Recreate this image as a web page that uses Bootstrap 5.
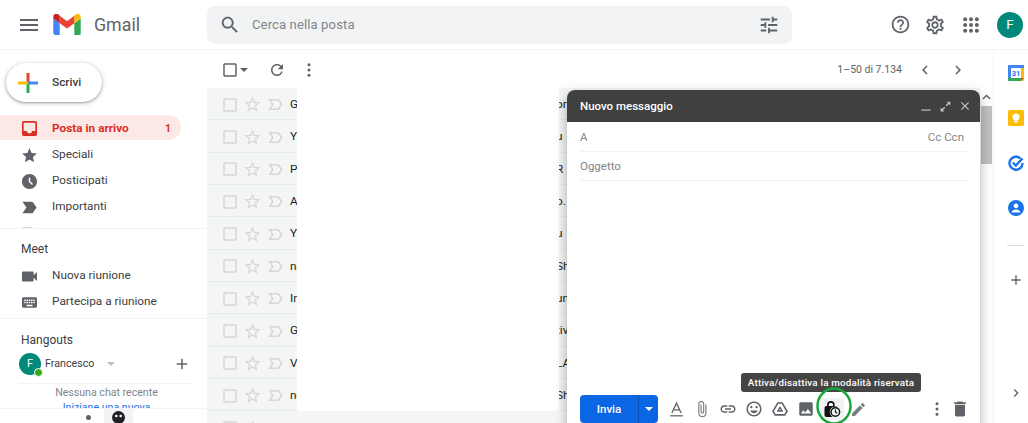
<!DOCTYPE html>
<html lang="it">
<head>
<meta charset="utf-8">
<title>Gmail</title>
<link href="https://cdn.jsdelivr.net/npm/bootstrap@5.3.0/dist/css/bootstrap.min.css" rel="stylesheet">
<style>
html,body{height:423px;overflow:hidden;background:#fff}
body{font-family:Roboto,"Liberation Sans",sans-serif;color:#202124;position:relative;width:1028px}
svg{display:block;fill:currentColor;flex:none}
.grey{color:#5f6368}
.topbar{height:50px;border-bottom:1px solid #f1f3f4}
.burger{width:24px;height:24px;margin-left:17px}
.logo{width:28px;height:21px;margin-left:12px;margin-top:-1px}
.brand{font-size:17.8px;color:#5f6368;margin-left:13px;width:113px;line-height:1}
.searchbox{width:585px;height:38px;background:#f1f3f4;border-radius:8px;padding:0 12px}
.searchbox span{font-size:13.1px;color:#80868b;margin-left:11px;letter-spacing:.1px}
.topright{margin-left:98px}
.avatar-top{width:26px;height:26px;border-radius:50%;background:#00897b;color:#fff;font-size:13.5px;margin-left:16px}
.page{height:373px}
.sidebar{width:207px;flex:none}
.nav-area{height:179px;overflow:hidden;border-bottom:1px solid #f1f3f4;padding-top:13px}
.compose-btn{width:96px;height:39px;margin-left:6px;border-radius:20px;background:#fff;box-shadow:0 1px 2px rgba(60,64,67,.35),0 1px 4px 1px rgba(60,64,67,.2);font-size:11.8px;font-weight:500;color:#3c4043;padding-left:12px;gap:14px}
.nav-list{margin-top:13px}
.nav-line{height:26px;width:181px;padding:2px 0 0 22px;font-size:11.8px;color:#3c4043;border-radius:0 13px 13px 0}
.nav-line svg{margin-right:15px}
.nav-line.on{background:#fce8e6;color:#d93025;font-weight:700;height:25px;margin-bottom:1px}
.nav-line .num{margin-left:auto;margin-right:10px;font-size:10.5px}
.meet{height:90px;border-bottom:1px solid #f1f3f4;padding-top:10px}
.side-head{font-size:12px;padding-left:21px;color:#3c4043;line-height:20px;height:20px}
.meet .nav-line{position:relative;top:-1px}
.hang{height:89px;overflow:hidden;padding-top:11px;position:relative}
.me-row{height:24px;padding:0 0 0 19px;margin-top:2px;font-size:10.7px;color:#3c4043;position:relative}
.me-name{padding-top:1px}
.me-ava{width:22px;height:22px;border-radius:50%;background:#00897b;color:#fff;font-size:11px;position:relative}
.me-dot{position:absolute;right:-2px;bottom:-2px;width:9px;height:9px;border-radius:50%;background:#34a81a;border:1px solid #fff}
.caret-s{width:0;height:0;border:4px solid transparent;border-top-color:#bdc1c6;border-bottom:0}
.chat-box{margin:7px 13px 0 19px;border-top:1px solid #f1f3f4;text-align:center;font-size:10.6px;color:#80868b;line-height:15px;padding-top:1px}
.chat-box a{color:#1a73e8;text-decoration:none;display:block}
.hang-foot{height:15px;border-top:1px solid #f1f3f4;overflow:hidden}
.foot-dot{width:5px;height:5px;border-radius:50%;background:#5f6368;margin:6px 13px 0 86px}
.foot-tab{width:29px;height:15px;background:#f1f3f4;display:flex;justify-content:center;padding-top:2px}
.mainpane{width:773px;flex:none}
.tools{height:38px;padding-left:14px;padding-top:1px;flex:none}
.pager{margin-left:auto;font-size:10.5px;color:#5f6368}
.mailrow{height:32.35px;flex:none;background:#f4f6f6;border-bottom:1px solid #e9ecee;padding:2px 0 0 14px;white-space:nowrap;overflow:hidden;font-size:11.8px}
.mailrow svg{color:#d4d6d8}
.sender{width:266px;flex:none;margin-left:5px;color:#202124}
.frag{color:#202124}
.sbar{width:13px;flex:none;height:373px;padding:41px 1px 0}
.sbar svg{margin:0 auto;color:#5f6368}
.thumb{height:58px;background:#c1c1c1;margin-top:4px}
.rail{width:35px;flex:none;border-left:1px solid #f1f3f4;padding-top:15px}
.rail-i{width:16px;height:16px;margin:0 0 29px 14px}
.rail-sep{width:17px;height:1px;background:#dadce0;margin:0 0 26px 13px}
.cover{position:absolute;left:297px;top:88px;width:262px;height:323px;background:#fff}
.composer{position:absolute;left:567px;top:90px;width:413px;height:340px;background:#fff;border-radius:8px 8px 0 0;box-shadow:0 8px 10px 1px rgba(0,0,0,.14),0 3px 14px 2px rgba(0,0,0,.12),0 5px 5px -3px rgba(0,0,0,.2)}
.comp-head{height:32px;background:#404040;border-radius:8px 8px 0 0;color:#fff;font-size:11.5px;font-weight:500;padding:0 8px 0 13px}
.comp-head span{padding-top:1px}
.comp-head svg{color:#c4c4c4}
.comp-field{height:29px;margin:0 12px 0 13px;border-bottom:1px solid #f1f3f4;font-size:11.5px;color:#80868b;padding-top:2px}
.comp-field.first{height:30px}
.comp-field .cc{margin-left:auto;margin-right:4px}
.comp-actions{position:absolute;left:13px;top:305px;right:0;height:28px}
.send-a{width:58px;height:28px;background:#0b66e4;border-radius:4px 0 0 4px;color:#fff;font-size:11.5px;font-weight:500;border:0;padding:2px 0 0}
.send-b{width:20px;height:28px;background:#0b66e4;border-radius:0 4px 4px 0;border:0;border-left:1px solid #0a50b4;padding:0}
.send-b i{display:block;width:0;height:0;border:4px solid transparent;border-top-color:#fff;border-bottom:0;margin:auto}
.tool-i{width:26px;height:24px;display:flex;justify-content:center;align-items:center;color:#5f6368}
.tool-i.hot{background:#f1f3f4;color:#111;height:23px;width:24px;margin:0 1px}
.tool-i.dim{color:#777b7f}
.tool-first{margin-left:5px}
.tip{position:absolute;left:741px;top:373px;width:180px;height:19px;background:#444;color:#fff;border-radius:3px;font-size:9.8px;font-weight:500;text-align:center;line-height:19px;letter-spacing:.2px;white-space:nowrap}
.ring{position:absolute;left:816px;top:387px}
</style>
</head>
<body>
<svg width="0" height="0" style="position:absolute">
<symbol id="i-menu" viewBox="0 0 24 24"><path d="M3 18h18v-2H3v2zm0-5h18v-2H3v2zm0-7v2h18V6H3z"/></symbol>
<symbol id="i-search" viewBox="0 0 24 24"><path d="M15.5 14h-.79l-.28-.27C15.41 12.59 16 11.11 16 9.5 16 5.91 13.09 3 9.5 3S3 5.91 3 9.5 5.91 16 9.5 16c1.61 0 3.09-.59 4.23-1.57l.27.28v.79l5 4.99L20.49 19l-4.99-5zm-6 0C7.01 14 5 11.99 5 9.5S7.01 5 9.5 5 14 7.01 14 9.5 11.99 14 9.5 14z"/></symbol>
<symbol id="i-tune" viewBox="0 0 24 24"><path d="M3 17v2h6v-2H3zM3 5v2h10V5H3zm10 16v-2h8v-2h-8v-2h-2v6h2zM7 9v2H3v2h4v2h2V9H7zm14 4v-2H11v2h10zm-6-4h2V7h4V5h-4V3h-2v6z"/></symbol>
<symbol id="i-help" viewBox="0 0 24 24"><path d="M11 18h2v-2h-2v2zm1-16C6.48 2 2 6.48 2 12s4.48 10 10 10 10-4.48 10-10S17.52 2 12 2zm0 18c-4.41 0-8-3.59-8-8s3.59-8 8-8 8 3.59 8 8-3.59 8-8 8zm0-14c-2.21 0-4 1.79-4 4h2c0-1.1.9-2 2-2s2 .9 2 2c0 2-3 1.75-3 5h2c0-2.25 3-2.5 3-5 0-2.21-1.79-4-4-4z"/></symbol>
<symbol id="i-gear" viewBox="0 0 24 24"><path d="M19.43 12.98c.04-.32.07-.64.07-.98 0-.34-.03-.66-.07-.98l2.11-1.65c.19-.15.24-.42.12-.64l-2-3.46c-.09-.16-.26-.25-.44-.25-.06 0-.12.01-.17.03l-2.49 1c-.52-.4-1.08-.73-1.69-.98l-.38-2.65C14.46 2.18 14.25 2 14 2h-4c-.25 0-.46.18-.49.42l-.38 2.65c-.61.25-1.17.59-1.69.98l-2.49-1c-.06-.02-.12-.03-.18-.03-.17 0-.34.09-.43.25l-2 3.46c-.13.22-.07.49.12.64l2.11 1.65c-.04.32-.07.65-.07.98 0 .33.03.66.07.98l-2.11 1.65c-.19.15-.24.42-.12.64l2 3.46c.09.16.26.25.44.25.06 0 .12-.01.17-.03l2.49-1c.52.4 1.08.73 1.69.98l.38 2.65c.03.24.24.42.49.42h4c.25 0 .46-.18.49-.42l.38-2.65c.61-.25 1.17-.59 1.69-.98l2.49 1c.06.02.12.03.18.03.17 0 .34-.09.43-.25l2-3.46c.12-.22.07-.49-.12-.64l-2.11-1.65zm-1.98-1.71c.04.31.05.52.05.73 0 .21-.02.43-.05.73l-.14 1.13.89.7 1.08.84-.7 1.21-1.27-.51-1.04-.42-.9.68c-.43.32-.84.56-1.25.73l-1.06.43-.16 1.13-.2 1.35h-1.4l-.19-1.35-.16-1.13-1.06-.43c-.43-.18-.83-.41-1.23-.71l-.91-.7-1.06.43-1.27.51-.7-1.21 1.08-.84.89-.7-.14-1.13c-.03-.31-.05-.54-.05-.74s.02-.43.05-.73l.14-1.13-.89-.7-1.08-.84.7-1.21 1.27.51 1.04.42.9-.68c.43-.32.84-.56 1.25-.73l1.06-.43.16-1.13.2-1.35h1.39l.19 1.35.16 1.13 1.06.43c.43.18.83.41 1.23.71l.91.7 1.06-.43 1.27-.51.7 1.21-1.07.85-.89.7.14 1.13zM12 8c-2.21 0-4 1.79-4 4s1.79 4 4 4 4-1.79 4-4-1.79-4-4-4zm0 6c-1.1 0-2-.9-2-2s.9-2 2-2 2 .9 2 2-.9 2-2 2z"/></symbol>
<symbol id="i-apps" viewBox="0 0 24 24"><g><circle cx="5" cy="5" r="2.400"/><circle cx="12" cy="5" r="2.400"/><circle cx="19" cy="5" r="2.400"/><circle cx="5" cy="12" r="2.400"/><circle cx="12" cy="12" r="2.400"/><circle cx="19" cy="12" r="2.400"/><circle cx="5" cy="19" r="2.400"/><circle cx="12" cy="19" r="2.400"/><circle cx="19" cy="19" r="2.400"/></g></symbol>
<symbol id="i-refresh" viewBox="0 0 24 24"><path d="M17.65 6.35C16.2 4.9 14.21 4 12 4c-4.42 0-7.99 3.58-7.99 8s3.57 8 7.99 8c3.73 0 6.84-2.55 7.73-6h-2.08c-.82 2.33-3.04 4-5.65 4-3.31 0-6-2.69-6-6s2.69-6 6-6c1.66 0 3.14.69 4.22 1.78L13 11h7V4l-2.35 2.35z"/></symbol>
<symbol id="i-dots" viewBox="0 0 24 24"><circle cx="12" cy="5" r="2"/><circle cx="12" cy="12" r="2"/><circle cx="12" cy="19" r="2"/></symbol>
<symbol id="i-star" viewBox="0 0 24 24"><path d="M12 17.27L18.18 21l-1.64-7.03L22 9.24l-7.19-.61L12 2 9.19 8.63 2 9.24l5.46 4.73L5.82 21z"/></symbol>
<symbol id="i-staro" viewBox="0 0 24 24"><path d="M22 9.24l-7.19-.62L12 2 9.19 8.63 2 9.24l5.46 4.73L5.82 21 12 17.27 18.18 21l-1.63-7.03L22 9.24zM12 15.4l-3.76 2.27 1-4.28-3.32-2.88 4.38-.38L12 6.1l1.71 4.04 4.38.38-3.32 2.88 1 4.28L12 15.4z"/></symbol>
<symbol id="i-labelo" viewBox="0 0 24 24"><path d="M15 19H3l4.5-7L3 5h12c.65 0 1.26.31 1.63.84L21 12l-4.37 6.16c-.37.53-.98.84-1.63.84zm-8.5-2H15l3.5-5L15 7H6.5l3.2 5-3.2 5z"/></symbol>
<symbol id="i-label" viewBox="0 0 24 24"><path d="M3.500 18.990l11 .01c.67 0 1.270-.33 1.630-.84L20.500 12l-4.370-6.160c-.36-.51-.96-.84-1.630-.84l-11 .01L8.340 12 3.500 18.990z"/></symbol>
<symbol id="i-inbox" viewBox="0 0 24 24"><path d="M19 3H5c-1.100 0-2 .9-2 2v14c0 1.100.9 2 2 2h14c1.100 0 2-.9 2-2V5c0-1.100-.9-2-2-2zm0 12h-4c0 1.660-1.340 3-3 3s-3-1.340-3-3H5V5h14v10z"/></symbol>
<symbol id="i-clock" viewBox="0 0 24 24"><path d="M12 2C6.480 2 2 6.480 2 12s4.480 10 10 10 10-4.480 10-10S17.520 2 12 2zm3.300 14.700L11 12.400V7h2v4.600l3.700 3.700-1.400 1.400z"/></symbol>
<symbol id="i-video" viewBox="0 0 24 24"><path d="M17 10.500V7c0-.55-.45-1-1-1H4c-.55 0-1 .45-1 1v10c0 .55.45 1 1 1h12c.55 0 1-.45 1-1v-3.500l4 4v-11l-4 4z"/></symbol>
<symbol id="i-keys" viewBox="0 0 24 24"><path d="M20 5H4c-1.100 0-1.990.9-1.990 2L2 17c0 1.100.9 2 2 2h16c1.100 0 2-.9 2-2V7c0-1.100-.9-2-2-2zm-9 3h2v2h-2V8zm0 3h2v2h-2v-2zM8 8h2v2H8V8zm0 3h2v2H8v-2zm-1 2H5v-2h2v2zm0-3H5V8h2v2zm9 7H8v-2h8v2zm0-4h-2v-2h2v2zm0-3h-2V8h2v2zm3 3h-2v-2h2v2zm0-3h-2V8h2v2z"/></symbol>
<symbol id="i-check" viewBox="0 0 24 24"><path d="M19 5v14H5V5h14m0-2H5c-1.100 0-2 .9-2 2v14c0 1.100.9 2 2 2h14c1.100 0 2-.9 2-2V5c0-1.100-.9-2-2-2z"/></symbol>
<symbol id="i-left" viewBox="0 0 24 24"><path d="M15.410 7.410L14 6l-6 6 6 6 1.410-1.410L10.830 12z"/></symbol>
<symbol id="i-right" viewBox="0 0 24 24"><path d="M10 6L8.590 7.410 13.170 12l-4.580 4.590L10 18l6-6z"/></symbol>
<symbol id="i-up" viewBox="0 0 24 24"><path d="M7.410 15.410L12 10.830l4.590 4.580L18 14l-6-6-6 6z"/></symbol>
<symbol id="i-plus" viewBox="0 0 24 24"><path d="M19 13h-6v6h-2v-6H5v-2h6V5h2v6h6v2z"/></symbol>
<symbol id="i-close" viewBox="0 0 24 24"><path d="M19 6.410L17.590 5 12 10.590 6.410 5 5 6.410 10.590 12 5 17.590 6.410 19 12 13.410 17.590 19 19 17.590 13.410 12z"/></symbol>
<symbol id="i-min" viewBox="0 0 24 24"><path d="M4 18h16v2H4z"/></symbol>
<symbol id="i-expand" viewBox="0 0 24 24"><path d="M21 3h-7l2.600 2.600-4.200 4.200 1.800 1.800 4.200-4.200L21 10zM3 21h7l-2.600-2.600 4.200-4.200-1.800-1.800-4.200 4.200L3 14z"/></symbol>
<symbol id="i-text" viewBox="0 0 24 24"><path d="M3 20h18v1.800H3z"/><path d="M5.500 17L12 3l6.500 14M8 12.500h8" fill="none" stroke="currentColor" stroke-width="1.800"/></symbol>
<symbol id="i-clip" viewBox="0 0 24 24"><path d="M16.500 6v11.500c0 2.210-1.790 4-4 4s-4-1.790-4-4V5c0-1.380 1.120-2.500 2.500-2.500s2.500 1.120 2.500 2.500v10.500c0 .55-.45 1-1 1s-1-.45-1-1V6H10v9.500c0 1.380 1.120 2.500 2.500 2.500s2.500-1.120 2.500-2.500V5c0-2.210-1.790-4-4-4S7 2.790 7 5v12.500c0 3.040 2.460 5.500 5.500 5.500s5.500-2.460 5.500-5.500V6h-1.500z"/></symbol>
<symbol id="i-link" viewBox="0 0 24 24"><path d="M3.900 12c0-1.710 1.390-3.100 3.100-3.100h4V7H7c-2.760 0-5 2.240-5 5s2.240 5 5 5h4v-1.900H7c-1.710 0-3.100-1.390-3.100-3.100zM8 13h8v-2H8v2zm9-6h-4v1.900h4c1.710 0 3.100 1.390 3.100 3.100s-1.390 3.100-3.100 3.100h-4V17h4c2.760 0 5-2.240 5-5s-2.240-5-5-5z"/></symbol>
<symbol id="i-smile" viewBox="0 0 24 24"><path d="M11.990 2C6.470 2 2 6.480 2 12s4.470 10 9.990 10C17.520 22 22 17.520 22 12S17.520 2 11.990 2zM12 20c-4.420 0-8-3.580-8-8s3.580-8 8-8 8 3.580 8 8-3.580 8-8 8zm3.500-9c.83 0 1.500-.67 1.500-1.500S16.330 8 15.500 8 14 8.670 14 9.500s.67 1.500 1.500 1.500zm-7 0c.83 0 1.500-.67 1.500-1.500S9.330 8 8.500 8 7 8.670 7 9.500 7.670 11 8.500 11zm3.500 6.500c2.330 0 4.310-1.460 5.110-3.500H6.890c.8 2.040 2.780 3.500 5.110 3.500z"/></symbol>
<symbol id="i-drive" viewBox="0 0 24 24"><path fill-rule="evenodd" d="M8.500 3h7l7 12-3.500 6H5l-3.500-6zm1.200 2L4 15l2 3.500h12l2-3.500-5.700-10zM12 8l4.500 7.500h-9zm0 3.800l-1.200 2h2.400z"/></symbol>
<symbol id="i-photo" viewBox="0 0 24 24"><path d="M21 19V5c0-1.100-.9-2-2-2H5c-1.100 0-2 .9-2 2v14c0 1.100.9 2 2 2h14c1.100 0 2-.9 2-2zM8.500 13.500l2.500 3.010L14.500 12l4.500 6H5l3.500-4.500z"/></symbol>
<symbol id="i-lock" viewBox="0 0 24 24"><path d="M6.500 9V6.500a4 4 0 0 1 8 0V9" fill="none" stroke="currentColor" stroke-width="2.200"/><rect x="2" y="8" width="17" height="14.500" rx="2.500"/><circle cx="16.500" cy="16" r="7.500" fill="#f1f3f4"/><circle cx="16.500" cy="16" r="5.700" fill="none" stroke="currentColor" stroke-width="1.900"/><path d="M16.500 12.800V16l2.600 1.700" fill="none" stroke="currentColor" stroke-width="1.500"/></symbol>
<symbol id="i-pen" viewBox="0 0 24 24"><path d="M3 17.250V21h3.750L17.810 9.940l-3.750-3.750L3 17.250zM20.710 7.040c.39-.39.39-1.020 0-1.410l-2.340-2.340c-.39-.39-1.020-.39-1.410 0l-1.830 1.830 3.750 3.750 1.830-1.830z"/></symbol>
<symbol id="i-trash" viewBox="0 0 24 24"><path d="M6 19c0 1.100.9 2 2 2h8c1.100 0 2-.9 2-2V7H6v12zM19 4h-3.500l-1-1h-5l-1 1H5v2h14V4z"/></symbol>
</svg>

<header class="topbar d-flex align-items-center">
  <svg class="burger grey"><use href="#i-menu"/></svg>
  <svg class="logo" viewBox="0 0 30 23">
    <path d="M2 23h5V10L0 5v15.500A2.500 2.500 0 0 0 2 23z" fill="#4285f4"/>
    <path d="M23 23h5a2 2 0 0 0 2-2.500V5l-7 5z" fill="#34a853"/>
    <path d="M23 2v8l7-5V3c0-2.800-3.200-4.300-5.300-2.600z" fill="#fbbc04"/>
    <path d="M7 10V2l8 6 8-6v8l-8 6z" fill="#ea4335"/>
    <path d="M0 3v2l7 5V2L5.300.4C3.200-1.300 0 .2 0 3z" fill="#c5221f"/>
  </svg>
  <div class="brand">Gmail</div>
  <div class="searchbox d-flex align-items-center grey">
    <svg width="22" height="22"><use href="#i-search"/></svg>
    <span>Cerca nella posta</span>
    <svg class="ms-auto" width="22" height="22"><use href="#i-tune"/></svg>
  </div>
  <div class="topright d-flex align-items-center grey">
    <svg width="21" height="21"><use href="#i-help"/></svg>
    <svg width="22" height="22" style="margin-left:13px"><use href="#i-gear"/></svg>
    <svg width="20" height="20" style="margin-left:15px"><use href="#i-apps"/></svg>
  </div>
  <div class="avatar-top d-flex align-items-center justify-content-center">F</div>
</header>

<div class="page d-flex">
  <aside class="sidebar">
    <div class="nav-area">
      <div class="compose-btn d-flex align-items-center">
        <svg width="20" height="20" viewBox="0 0 20 20">
          <rect x="8.500" y="0" width="3" height="10" fill="#ea4335"/>
          <rect x="10" y="8.500" width="10" height="3" fill="#4285f4"/>
          <rect x="8.500" y="10" width="3" height="10" fill="#34a853"/>
          <rect x="0" y="8.500" width="10" height="3" fill="#fbbc04"/>
        </svg>
        Scrivi
      </div>
      <div class="nav-list">
        <div class="nav-line on d-flex align-items-center"><svg width="15" height="15" viewBox="3 3 18 18"><use href="#i-inbox" width="24" height="24"/></svg>Posta in arrivo<span class="num">1</span></div>
        <div class="nav-line d-flex align-items-center"><svg width="15" height="15" viewBox="2 2 20 20" class="grey"><use href="#i-star" width="24" height="24"/></svg>Speciali</div>
        <div class="nav-line d-flex align-items-center"><svg width="15" height="15" viewBox="2 2 20 20" class="grey"><use href="#i-clock" width="24" height="24"/></svg>Posticipati</div>
        <div class="nav-line d-flex align-items-center"><svg width="15" height="15" viewBox="3 4 18 16" class="grey"><use href="#i-label" width="24" height="24"/></svg>Importanti</div>
        <div class="nav-line d-flex align-items-center"><svg width="15" height="15" viewBox="3 4 18 16" class="grey"><use href="#i-label" width="24" height="24"/></svg>Inviati</div>
      </div>
    </div>
    <div class="meet">
      <div class="side-head">Meet</div>
      <div class="nav-line d-flex align-items-center mt-1"><svg width="15" height="15" viewBox="3 3 18 18" class="grey"><use href="#i-video" width="24" height="24"/></svg>Nuova riunione</div>
      <div class="nav-line d-flex align-items-center"><svg width="15" height="15" viewBox="2 2 20 20" class="grey"><use href="#i-keys" width="24" height="24"/></svg>Partecipa a riunione</div>
    </div>
    <div class="hang">
      <div class="side-head">Hangouts</div>
      <div class="me-row d-flex align-items-center">
        <div class="me-ava d-flex align-items-center justify-content-center">F<span class="me-dot"></span></div>
        <span class="ms-1 me-name">Francesco</span>
        <span class="caret-s" style="margin-left:13px"></span>
        <svg class="ms-auto grey" width="18" height="18" style="margin-right:16px"><use href="#i-plus"/></svg>
      </div>
      <div class="chat-box">Nessuna chat recente<a href="#">Iniziane una nuova</a></div>
    </div>
    <div class="hang-foot d-flex"><span class="foot-dot"></span><span class="foot-tab"><svg width="13" height="13" viewBox="0 0 13 13"><circle cx="6.500" cy="6.500" r="6.500" fill="#202124"/><circle cx="4.300" cy="5" r="1.300" fill="#fff"/><circle cx="8.700" cy="5" r="1.300" fill="#fff"/></svg></span></div>
  </aside>

  <main class="mainpane d-flex flex-column">
    <div class="tools d-flex align-items-center grey" >
      <svg width="18" height="18"><use href="#i-check"/></svg>
      <span class="caret-s" style="border-top-color:#5f6368;margin-left:1px"></span>
      <svg width="18" height="18" style="margin-left:20px"><use href="#i-refresh"/></svg>
      <svg width="18" height="18" style="margin-left:14px"><use href="#i-dots"/></svg>
      <span class="pager" >1–50 di 7.134</span>
      <svg width="18" height="18" style="margin-left:14px"><use href="#i-left"/></svg>
      <svg width="18" height="18" style="margin-left:15px;margin-right:13px"><use href="#i-right"/></svg>
    </div>
    <div class="mailrow d-flex align-items-center"><svg width="18" height="18"><use href="#i-check"/></svg><svg class="ms-1" width="19" height="19"><use href="#i-staro"/></svg><svg class="ms-1" width="19" height="19"><use href="#i-labelo"/></svg><span class="sender">Google</span><span class="frag">orn</span></div>
    <div class="mailrow d-flex align-items-center"><svg width="18" height="18"><use href="#i-check"/></svg><svg class="ms-1" width="19" height="19"><use href="#i-staro"/></svg><svg class="ms-1" width="19" height="19"><use href="#i-labelo"/></svg><span class="sender">YouTube</span><span class="frag">u</span></div>
    <div class="mailrow d-flex align-items-center"><svg width="18" height="18"><use href="#i-check"/></svg><svg class="ms-1" width="19" height="19"><use href="#i-staro"/></svg><svg class="ms-1" width="19" height="19"><use href="#i-labelo"/></svg><span class="sender">Poste</span><span class="frag">R</span></div>
    <div class="mailrow d-flex align-items-center"><svg width="18" height="18"><use href="#i-check"/></svg><svg class="ms-1" width="19" height="19"><use href="#i-staro"/></svg><svg class="ms-1" width="19" height="19"><use href="#i-labelo"/></svg><span class="sender">Amazon</span><span class="frag">o.</span></div>
    <div class="mailrow d-flex align-items-center"><svg width="18" height="18"><use href="#i-check"/></svg><svg class="ms-1" width="19" height="19"><use href="#i-staro"/></svg><svg class="ms-1" width="19" height="19"><use href="#i-labelo"/></svg><span class="sender">YouTube</span><span class="frag">u</span></div>
    <div class="mailrow d-flex align-items-center"><svg width="18" height="18"><use href="#i-check"/></svg><svg class="ms-1" width="19" height="19"><use href="#i-staro"/></svg><svg class="ms-1" width="19" height="19"><use href="#i-labelo"/></svg><span class="sender">news</span><span class="frag">Sh</span></div>
    <div class="mailrow d-flex align-items-center"><svg width="18" height="18"><use href="#i-check"/></svg><svg class="ms-1" width="19" height="19"><use href="#i-staro"/></svg><svg class="ms-1" width="19" height="19"><use href="#i-labelo"/></svg><span class="sender">Info</span><span class="frag">un</span></div>
    <div class="mailrow d-flex align-items-center"><svg width="18" height="18"><use href="#i-check"/></svg><svg class="ms-1" width="19" height="19"><use href="#i-staro"/></svg><svg class="ms-1" width="19" height="19"><use href="#i-labelo"/></svg><span class="sender">Google</span><span class="frag">tiv</span></div>
    <div class="mailrow d-flex align-items-center"><svg width="18" height="18"><use href="#i-check"/></svg><svg class="ms-1" width="19" height="19"><use href="#i-staro"/></svg><svg class="ms-1" width="19" height="19"><use href="#i-labelo"/></svg><span class="sender">Vodafone</span><span class="frag">LA</span></div>
    <div class="mailrow d-flex align-items-center"><svg width="18" height="18"><use href="#i-check"/></svg><svg class="ms-1" width="19" height="19"><use href="#i-staro"/></svg><svg class="ms-1" width="19" height="19"><use href="#i-labelo"/></svg><span class="sender">news</span><span class="frag">Sh</span></div>
    <div class="mailrow d-flex align-items-center"><svg width="18" height="18"><use href="#i-check"/></svg><svg class="ms-1" width="19" height="19"><use href="#i-staro"/></svg><svg class="ms-1" width="19" height="19"><use href="#i-labelo"/></svg></div>
  </main>

  <div class="sbar"><svg width="11" height="11" viewBox="4 6 16 10"><use href="#i-up" width="24" height="24"/></svg><div class="thumb"></div></div>

  <nav class="rail">
    <svg class="rail-i" viewBox="0 0 16 16"><rect x="0" y="0" width="16" height="16" rx="1.500" fill="#fbbc04"/><rect x="0" y="0" width="13" height="13" fill="#fff"/><path d="M0 0h16v3H0z" fill="#4285f4"/><path d="M0 0h3v16H0z" fill="#4285f4"/><path d="M0 13h13v3H1.500A1.500 1.500 0 0 1 0 14.500z" fill="#34a853"/><path d="M13 13h3l-3 3z" fill="#ea4335"/><text x="8" y="11" font-size="7.500" font-weight="700" text-anchor="middle" fill="#1a73e8" font-family="Roboto,sans-serif">31</text></svg>
    <svg class="rail-i" viewBox="0 0 16 16"><rect width="16" height="16" rx="1.500" fill="#fbbc04"/><circle cx="8" cy="7" r="3.500" fill="#fff"/><rect x="6.300" y="10.500" width="3.400" height="2" fill="#fff"/></svg>
    <svg class="rail-i" viewBox="0 0 16 16"><path d="M12.500 3.500A6.500 6.500 0 1 0 14.500 8" fill="none" stroke="#1a73e8" stroke-width="2.400"/><path d="M4.800 7.500L7.800 10.500L14.500 3.500" fill="none" stroke="#1a73e8" stroke-width="2.400"/></svg>
    <svg class="rail-i" viewBox="0 0 16 16"><circle cx="8" cy="8" r="8" fill="#1a73e8"/><circle cx="8" cy="5.800" r="2.400" fill="#fff"/><path d="M3.500 12.500c.5-2 2.500-3 4.500-3s4 1 4.500 3z" fill="#fff"/></svg>
    <div class="rail-sep"></div>
    <svg class="rail-i grey" style="margin-bottom:97px"><use href="#i-plus"/></svg>
    <svg class="rail-i grey"><use href="#i-right"/></svg>
  </nav>
</div>

<div class="cover"></div>

<section class="composer">
  <div class="comp-head d-flex align-items-center">
    <span>Nuovo messaggio</span>
    <svg class="ms-auto" width="14" height="14"><use href="#i-min"/></svg>
    <svg style="margin-left:6px" width="13" height="13"><use href="#i-expand"/></svg>
    <svg style="margin-left:6px" width="14" height="14"><use href="#i-close"/></svg>
  </div>
  <div class="comp-field first d-flex align-items-center"><span>A</span><span class="cc">Cc Ccn</span></div>
  <div class="comp-field d-flex align-items-center"><span>Oggetto</span></div>
  <div class="comp-actions d-flex align-items-center">
    <button class="send-a">Invia</button><button class="send-b"><i></i></button>
    <span class="tool-i tool-first"><svg width="17" height="17"><use href="#i-text"/></svg></span>
    <span class="tool-i dim"><svg width="18" height="18"><use href="#i-clip"/></svg></span>
    <span class="tool-i"><svg width="18" height="18"><use href="#i-link"/></svg></span>
    <span class="tool-i"><svg width="18" height="18"><use href="#i-smile"/></svg></span>
    <span class="tool-i"><svg width="18" height="18"><use href="#i-drive"/></svg></span>
    <span class="tool-i"><svg width="18" height="18"><use href="#i-photo"/></svg></span>
    <span class="tool-i hot"><svg width="18" height="18"><use href="#i-lock"/></svg></span>
    <span class="tool-i dim"><svg width="17" height="17"><use href="#i-pen"/></svg></span>
    <span class="tool-i ms-auto"><svg width="18" height="18"><use href="#i-dots"/></svg></span>
    <span class="tool-i" style="margin-right:7px;margin-left:-3px"><svg width="20" height="20"><use href="#i-trash"/></svg></span>
  </div>
</section>

<div class="tip">Attiva/disattiva la modalità riservata</div>
<svg class="ring" width="36" height="38" viewBox="0 0 36 38"><ellipse cx="18" cy="19" rx="16.500" ry="17.500" fill="none" stroke="#1aa63a" stroke-width="2.500"/></svg>
</body>
</html>
